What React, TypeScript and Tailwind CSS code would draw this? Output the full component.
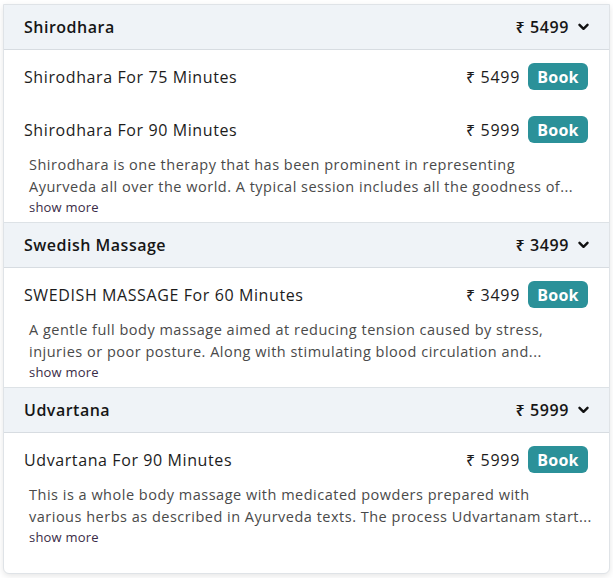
import React from "react";

type Item = { name: string; price: string };
type Section = {
  title: string;
  price: string;
  items: Item[];
  lines: [string, string];
};

const sections: Section[] = [
  {
    title: "Shirodhara",
    price: "₹ 5499",
    items: [
      { name: "Shirodhara For 75 Minutes", price: "₹ 5499" },
      { name: "Shirodhara For 90 Minutes", price: "₹ 5999" },
    ],
    lines: [
      "Shirodhara is one therapy that has been prominent in representing",
      "Ayurveda all over the world. A typical session includes all the goodness of...",
    ],
  },
  {
    title: "Swedish Massage",
    price: "₹ 3499",
    items: [{ name: "SWEDISH MASSAGE For 60 Minutes", price: "₹ 3499" }],
    lines: [
      "A gentle full body massage aimed at reducing tension caused by stress,",
      "injuries or poor posture. Along with stimulating blood circulation and...",
    ],
  },
  {
    title: "Udvartana",
    price: "₹ 5999",
    items: [{ name: "Udvartana For 90 Minutes", price: "₹ 5999" }],
    lines: [
      "This is a whole body massage with medicated powders prepared with",
      "various herbs as described in Ayurveda texts. The process Udvartanam start...",
    ],
  },
];

function Chevron() {
  return (
    <svg width="11" height="8" viewBox="0 0 11 8" className="ml-[9px]">
      <path d="M1.5 1.8 L5.5 5.8 L9.5 1.8" fill="none" stroke="#111" strokeWidth="2.4" strokeLinecap="round" strokeLinejoin="round" />
    </svg>
  );
}

export default function App() {
  return (
    <div
      className="w-[613px] h-[578px] bg-white overflow-hidden pt-[4px] pl-[3px]"
      style={{ fontFamily: '"Open Sans", "Noto Sans", sans-serif' }}
    >
      <div className="w-[607px] bg-white border border-[#dfe3e7] rounded-b-[6px] shadow-[0_2px_6px_rgba(0,0,0,0.10)] pb-[21px]">
        {sections.map((s, i) => (
          <div key={s.title} className={i > 0 ? "border-t border-[#dde2e6]" : ""}>
            <div className="h-[45px] bg-[#eff3f7] border-b border-[#d7dce1] flex items-center justify-between pl-[20px] pr-[20px]">
              <span className="text-[16px] font-semibold text-[#161616] tracking-[0.5px]">{s.title}</span>
              <span className="flex items-center text-[16px] font-semibold text-[#161616] tracking-[0.6px]">
                {s.price}
                <Chevron />
              </span>
            </div>
            {s.items.map((it) => (
              <div key={it.name} className="h-[53px] flex items-center justify-between pl-[20px] pr-[21px]">
                <span className="text-[16px] text-[#1c1c1c] tracking-[0.6px]">{it.name}</span>
                <span className="flex items-center">
                  <span className="text-[16px] text-[#1c1c1c] tracking-[0.7px]">{it.price}</span>
                  <button className="ml-[8px] w-[60px] h-[27px] rounded-[6px] bg-[#2b9199] text-white text-[16px] font-bold tracking-[0.3px] flex items-center justify-center">
                    Book
                  </button>
                </span>
              </div>
            ))}
            <div className="-mt-[2px] pl-[25px] pr-[20px] pb-[5px]">
              <div className="text-[14.5px] leading-[21.5px] text-[#4a4a4a] tracking-[0.5px] whitespace-nowrap">{s.lines[0]}</div>
              <div className="text-[14.5px] leading-[21.5px] text-[#4a4a4a] tracking-[0.5px] whitespace-nowrap">{s.lines[1]}</div>
              <div className="mt-[2px] h-[18px] flex items-center text-[13px] text-[#3a2c47] tracking-[0.2px]">show more</div>
            </div>
          </div>
        ))}
      </div>
    </div>
  );
}
